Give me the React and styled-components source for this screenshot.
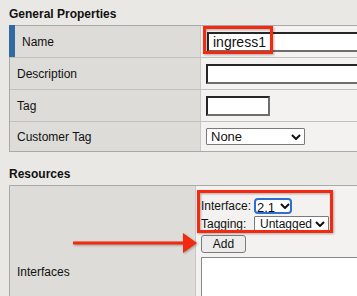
import React from "react";
import styled, { createGlobalStyle } from "styled-components";

const GlobalStyle = createGlobalStyle`
  html, body {
    margin: 0;
    padding: 0;
    background: #e9e8e5;
    overflow: hidden;
  }
  body {
    font-family: "Liberation Sans", Arial, sans-serif;
    font-size: 12px;
    color: #111;
  }
`;

const Page = styled.div`
  position: relative;
  width: 357px;
  height: 296px;
  padding-left: 9px;
  box-sizing: border-box;
  overflow: hidden;
`;

const SectionTitle = styled.div`
  font-weight: bold;
  font-size: 12px;
  line-height: 16px;
  padding: ${(p) => p.$top}px 0 ${(p) => p.$bottom}px;
`;

const PropTable = styled.div`
  display: grid;
  grid-template-columns: ${(p) => p.$labelWidth}px 240px;
  width: max-content;
  border-top: 1px solid #a9a9a9;
  border-left: 1px solid #a9a9a9;
  border-bottom: 1px solid #a9a9a9;
`;

const LabelCell = styled.div`
  position: relative;
  display: flex;
  align-items: center;
  box-sizing: border-box;
  height: ${(p) => (p.$height ? `${p.$height}px` : "auto")};
  padding-left: ${(p) => (p.$active ? 12 : 7)}px;
  background: #dddcd8;
  border-bottom: ${(p) => (p.$last ? "none" : "1px solid #c2c1be")};

  ${(p) =>
    p.$active &&
    `
    &::before {
      content: "";
      position: absolute;
      left: -1px;
      top: -1px;
      bottom: 0;
      width: 6px;
      background: #2f6ba1;
    }
  `}
`;

const ValueCell = styled.div`
  display: flex;
  align-items: center;
  box-sizing: border-box;
  height: ${(p) => (p.$height ? `${p.$height}px` : "auto")};
  padding-left: 5px;
  background: #f3f2f0;
  border-left: 1px solid #c9c8c5;
  border-bottom: ${(p) => (p.$last ? "none" : "1px solid #c2c1be")};
`;

const StackCell = styled.div`
  display: flex;
  flex-direction: column;
  align-items: flex-start;
  box-sizing: border-box;
  min-height: 172px;
  padding: 12px 0 8px 5px;
  background: #f3f2f0;
  border-left: 1px solid #c9c8c5;
`;

const TextInput = styled.input`
  box-sizing: border-box;
  width: ${(p) => p.$width}px;
  height: 20px;
  margin: 0 0 0 ${(p) => p.$shift || 0}px;
  padding: 0 4px;
  font-family: "Liberation Sans", Arial, sans-serif;
  font-size: 14px;
  color: #111;
  background: #fff;
  border: 2px solid;
  border-color: #262626 #6e6e6e #6e6e6e #262626;
  outline: none;
`;

const SelectWrap = styled.span`
  position: relative;
  display: inline-block;
  justify-self: start;
  line-height: 0;
  svg {
    position: absolute;
    right: ${(p) => p.$chevRight}px;
    top: 50%;
    margin-top: -3px;
    pointer-events: none;
  }
`;

const Select = styled.select`
  appearance: none;
  -webkit-appearance: none;
  box-sizing: border-box;
  width: ${(p) => p.$width}px;
  height: ${(p) => p.$height}px;
  margin: 0;
  padding: 0 0 0 ${(p) => p.$pad}px;
  font-family: "Liberation Sans", Arial, sans-serif;
  font-size: ${(p) => p.$size}px;
  color: #111;
  background: #fff;
  border: ${(p) => (p.$focus ? "2px solid #2c6fd1" : "1px solid #7a7a7a")};
  border-radius: ${(p) => (p.$focus ? 4 : 1)}px;
  outline: none;
`;

const InnerGrid = styled.div`
  display: grid;
  grid-template-columns: 53px auto;
  grid-auto-rows: 16px;
  row-gap: 2px;
  align-items: center;
`;

const SmallLabel = styled.span`
  font-size: 12px;
  line-height: 16px;
`;

const Button = styled.button`
  box-sizing: border-box;
  width: 45px;
  height: 18px;
  margin-top: 3px;
  padding: 0;
  font-family: "Liberation Sans", Arial, sans-serif;
  font-size: 12px;
  color: #111;
  background: #ececec;
  border: 1px solid #7c7c7c;
  border-radius: 3px;
`;

const TextArea = styled.textarea`
  box-sizing: border-box;
  width: 170px;
  height: 90px;
  margin-top: 4px;
  border: 1px solid #8a8a8a;
  background: #fff;
  resize: none;
`;

const MarkBox = styled.div`
  position: absolute;
  left: ${(p) => p.$x}px;
  top: ${(p) => p.$y}px;
  width: ${(p) => p.$w}px;
  height: ${(p) => p.$h}px;
  box-sizing: border-box;
  border: 3px solid #f42a10;
  filter: drop-shadow(1px 1px 1px rgba(0, 0, 0, 0.3));
  pointer-events: none;
`;

const Arrow = styled.svg`
  position: absolute;
  left: 70px;
  top: 230px;
  filter: drop-shadow(1px 1px 1px rgba(0, 0, 0, 0.3));
  pointer-events: none;
`;

const Chevron = () => (
  <svg width="10" height="6" viewBox="0 0 10 6">
    <polyline points="1,1 5,5 9,1" fill="none" stroke="#111" strokeWidth="2" />
  </svg>
);

const Dropdown = ({ value, width, height, pad, size, focus, chevRight }) => (
  <SelectWrap $chevRight={chevRight}>
    <Select
      defaultValue={value}
      $width={width}
      $height={height}
      $pad={pad}
      $size={size}
      $focus={focus}
    >
      <option>{value}</option>
    </Select>
    <Chevron />
  </SelectWrap>
);

export default function App() {
  return (
    <>
      <GlobalStyle />
      <Page>
        <SectionTitle $top={6} $bottom={3}>
          General Properties
        </SectionTitle>
        <PropTable $labelWidth={190}>
          <LabelCell $height={32} $active>
            Name
          </LabelCell>
          <ValueCell $height={32}>
            <TextInput $width={170} $shift={1} defaultValue="ingress1" />
          </ValueCell>

          <LabelCell $height={32}>Description</LabelCell>
          <ValueCell $height={32}>
            <TextInput $width={170} />
          </ValueCell>

          <LabelCell $height={32}>Tag</LabelCell>
          <ValueCell $height={32}>
            <TextInput $width={64} />
          </ValueCell>

          <LabelCell $height={29} $last>
            Customer Tag
          </LabelCell>
          <ValueCell $height={29} $last>
            <Dropdown value="None" width={99} height={17} pad={4} size={13} chevRight={4} />
          </ValueCell>
        </PropTable>

        <SectionTitle $top={14} $bottom={3}>
          Resources
        </SectionTitle>
        <PropTable $labelWidth={185}>
          <LabelCell $last>Interfaces</LabelCell>
          <StackCell>
            <InnerGrid>
              <SmallLabel>Interface:</SmallLabel>
              <Dropdown value="2.1" width={38} height={16} pad={1} size={13} focus chevRight={2} />
              <SmallLabel>Tagging:</SmallLabel>
              <Dropdown value="Untagged" width={75} height={16} pad={5} size={12} chevRight={4} />
            </InnerGrid>
            <Button>Add</Button>
            <TextArea />
          </StackCell>
        </PropTable>

        <MarkBox $x={203} $y={26} $w={70} $h={28} />
        <MarkBox $x={197} $y={190} $w={136} $h={43} />
        <Arrow width="130" height="26" viewBox="0 0 130 26">
          <line x1="3" y1="13" x2="115" y2="13" stroke="#f42a10" strokeWidth="3" />
          <polygon points="113,3 127,13 113,23" fill="#f42a10" />
        </Arrow>
      </Page>
    </>
  );
}
